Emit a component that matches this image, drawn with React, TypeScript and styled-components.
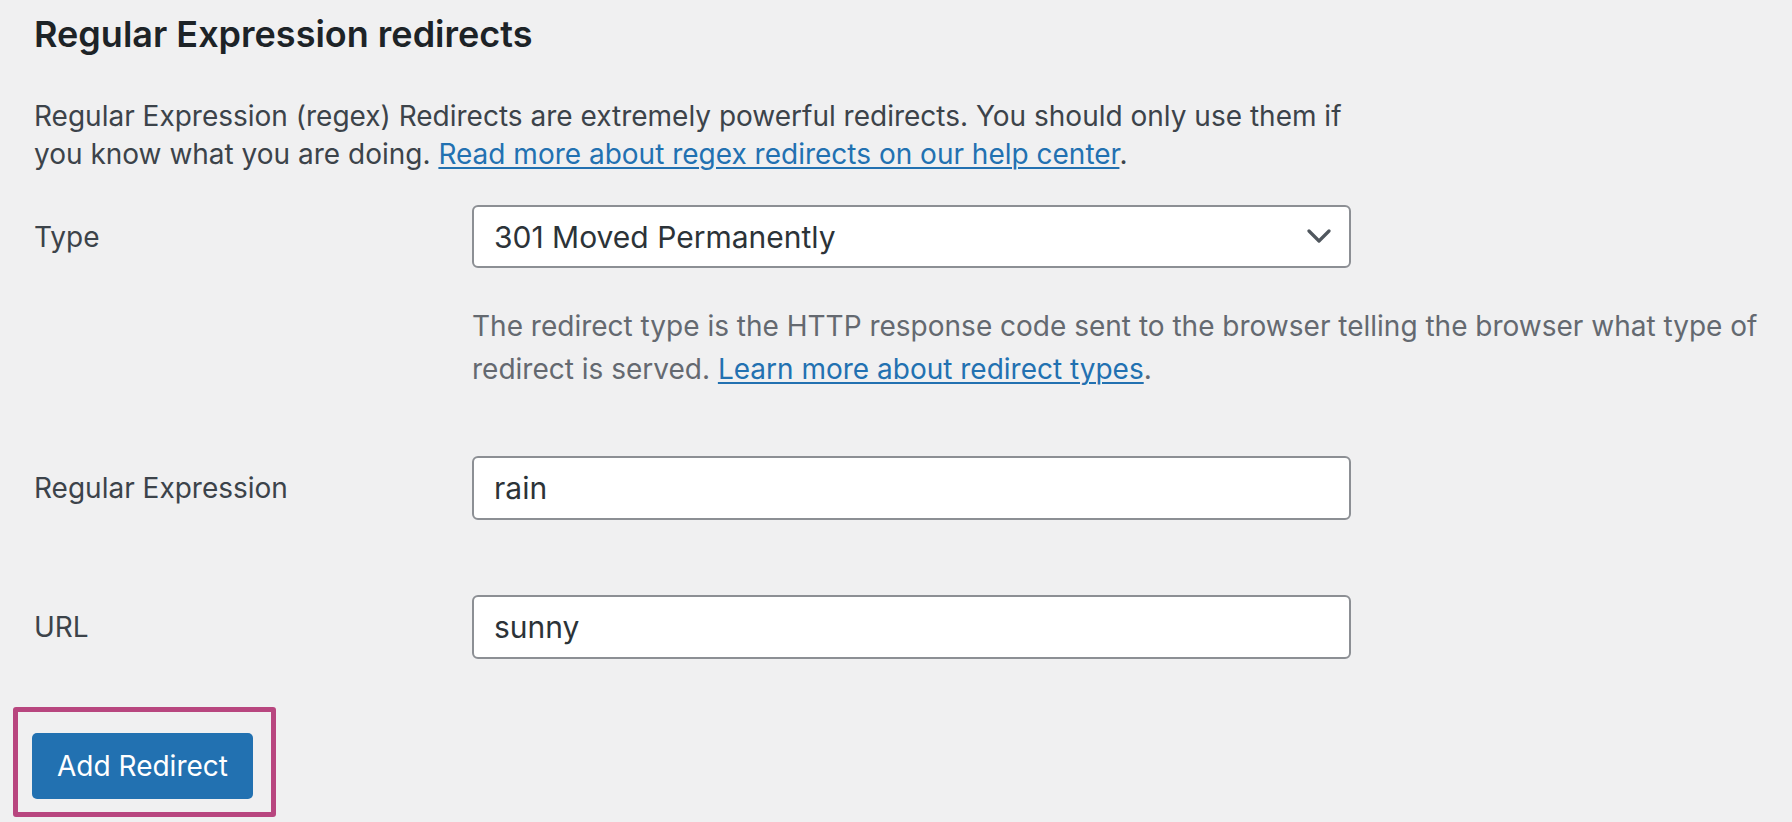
import { createGlobalStyle } from "styled-components";
import styled from "styled-components";

const GlobalStyle = createGlobalStyle`
    html, body {
        margin: 0;
        padding: 0;
        background-color: #f0f0f1;
    }
    body {
        font-family: Inter, "Liberation Sans", Arial, sans-serif;
        color: #3c434a;
    }
`;

const App = () => {
    return (
        <>
            <GlobalStyle />
            <Page>
                <Title>Regular Expression redirects</Title>
                <Intro>
                    Regular Expression (regex) Redirects are extremely powerful redirects. You should only use them if<br />
                    you know what you are doing. <TextLink href="#">Read more about regex redirects on our help center</TextLink>.
                </Intro>
                <FormTable>
                    <FormRow>
                        <FieldLabel>Type</FieldLabel>
                        <FieldCell>
                            <SelectBox>
                                <span>301 Moved Permanently</span>
                                <svg width="24" height="15" viewBox="0 0 24 15" fill="none">
                                    <polyline points="2,2 12,12 22,2" stroke="#50575e" strokeWidth="3.2" strokeLinecap="round" strokeLinejoin="round" />
                                </svg>
                            </SelectBox>
                            <Description>
                                The redirect type is the HTTP response code sent to the browser telling the browser what type of<br />
                                redirect is served. <TextLink href="#">Learn more about redirect types</TextLink>.
                            </Description>
                        </FieldCell>
                    </FormRow>
                    <FormRow>
                        <FieldLabel>Regular Expression</FieldLabel>
                        <FieldCell>
                            <TextInput type="text" defaultValue="rain" />
                        </FieldCell>
                    </FormRow>
                    <FormRow>
                        <FieldLabel>URL</FieldLabel>
                        <FieldCell>
                            <TextInput type="text" defaultValue="sunny" />
                        </FieldCell>
                    </FormRow>
                </FormTable>
                <Highlight>
                    <PrimaryButton type="button">Add Redirect</PrimaryButton>
                </Highlight>
            </Page>
        </>
    );
};

export default App;


const Page = styled.div`
    display: flex;
    flex-direction: column;
    align-items: flex-start;
    width: 100%;
    min-height: 822px;
    padding: 0 0 0 34px;
    box-sizing: border-box;
`;

const Title = styled.h2`
    margin: 13px 0 0 0;
    font-size: 36px;
    line-height: 42px;
    font-weight: 600;
    color: #1d2327;
`;

const Intro = styled.p`
    margin: 42px 0 0 0;
    font-size: 28px;
    line-height: 38px;
    color: #3c434a;
`;

const TextLink = styled.a`
    color: #2271b1;
    text-decoration: underline;
    text-underline-offset: 3px;
    text-decoration-thickness: 2px;
`;

const FormTable = styled.div`
    display: flex;
    flex-direction: column;
    gap: 75px;
    margin: 32px 0 0 0;
    width: 100%;
`;

const FormRow = styled.div`
    display: grid;
    grid-template-columns: 438px 1fr;
    align-items: start;
`;

const FieldLabel = styled.div`
    display: flex;
    align-items: center;
    height: 63px;
    font-size: 28px;
    color: #3c434a;
`;

const FieldCell = styled.div`
    display: flex;
    flex-direction: column;
    align-items: flex-start;
`;

const SelectBox = styled.div`
    display: flex;
    align-items: center;
    justify-content: space-between;
    width: 879px;
    height: 63px;
    padding: 0 18px 0 20px;
    box-sizing: border-box;
    border: 2px solid #8c8f94;
    border-radius: 6px;
    background-color: #ffffff;
    font-size: 30px;
    color: #2c3338;
`;

const Description = styled.p`
    margin: 37px 0 -10px 0;
    font-size: 28px;
    line-height: 43px;
    color: #646970;
`;

const TextInput = styled.input`
    display: block;
    width: 879px;
    height: 64px;
    padding: 0 20px;
    box-sizing: border-box;
    border: 2px solid #8c8f94;
    border-radius: 6px;
    background-color: #ffffff;
    font-family: Inter, "Liberation Sans", Arial, sans-serif;
    font-size: 30px;
    color: #2c3338;
    outline: none;
`;

const Highlight = styled.div`
    margin: 48px 0 0 -21px;
    padding: 21px 18px 13px 14px;
    border: 5px solid #b8467f;
    border-radius: 3px;
`;

const PrimaryButton = styled.button`
    display: flex;
    align-items: center;
    justify-content: center;
    width: 221px;
    height: 66px;
    padding: 0;
    border: none;
    border-radius: 5px;
    background-color: #2271b1;
    font-family: Inter, "Liberation Sans", Arial, sans-serif;
    font-size: 28px;
    color: #ffffff;
    cursor: pointer;
`;
